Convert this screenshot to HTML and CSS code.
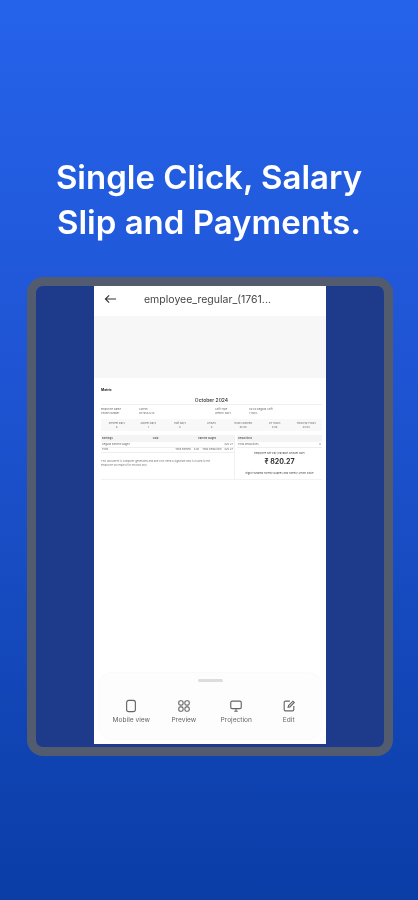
FILE: index.html
```html
<!DOCTYPE html>
<html lang="en">
<head>
<meta charset="utf-8">
<title>Single Click, Salary Slip and Payments.</title>
<link rel="stylesheet" href="styles.css">
</head>
<body>
<main class="screen">
  <h1 class="headline">Single Click, Salary<br>Slip and Payments.</h1>
  <section class="tablet">
    <div class="page">
      <header class="topbar">
        <svg class="back" viewBox="0 0 14 10" aria-hidden="true"><path d="M13 5H1.500M5.500 1 1.500 5l4 4" fill="none" stroke="#333" stroke-width="1.200"/></svg>
        <span class="file">employee_regular_(1761...</span>
      </header>
      <div class="banner"></div>
      <article class="slip">
        <div class="company">Metric</div>
        <div class="month">October 2024</div>
        <div class="info">
          <div><p>Employee Name</p><p>Phone Number</p></div>
          <div><p>Suresh</p><p>9876543210</p></div>
          <div><p>Shift Type</p><p>Weekly Days</p></div>
          <div><p>09:00 Regular Shift</p><p>7 Days</p></div>
        </div>
        <div class="stats">
          <div><p>Present Days</p><p>6</p></div>
          <div><p>Absent Days</p><p>1</p></div>
          <div><p>Half Days</p><p>0</p></div>
          <div><p>Leaves</p><p>0</p></div>
          <div><p>Hours Worked</p><p>48:00</p></div>
          <div><p>OT Hours</p><p>0:00</p></div>
          <div><p>Total Pay Hours</p><p>48:00</p></div>
        </div>
        <div class="ledger">
          <div class="ledger-main">
            <div class="ledger-head"><span>Earnings</span><span>Paid</span><span>Earned Wages</span></div>
            <div class="ledger-row"><span>Regular Earned Wages</span><span>820.27</span></div>
            <div class="ledger-row"><span>Total</span><span class="push">Total Earned</span><span>0.00</span><span>Total Deduction</span><span>820.27</span></div>
            <p class="note">This document is computer generated and does not need a signature and is issued to the employee on request for records only.</p>
          </div>
          <div class="ledger-side">
            <div class="ledger-head"><span>Deductions</span></div>
            <div class="ledger-row"><span>Total Deductions</span><span>0</span></div>
            <p class="net-label">Employee Net Pay (Payable Amount Due)</p>
            <p class="net">₹ 820.27</p>
            <p class="net-foot">Eight Hundred Twenty Rupees and Twenty Seven Paise</p>
          </div>
        </div>
      </article>
      <div class="spacer"></div>
      <nav class="sheet">
        <div class="handle"></div>
        <div class="actions">
          <div class="action">
            <svg viewBox="0 0 16 16" aria-hidden="true"><rect x="3" y="1.500" width="10" height="13" rx="2.500"/></svg>
            <span>Mobile view</span>
          </div>
          <div class="action">
            <svg viewBox="0 0 16 16" aria-hidden="true"><rect x="2" y="2" width="5" height="5" rx="2"/><rect x="9" y="2" width="5" height="5" rx="2"/><rect x="2" y="9" width="5" height="5" rx="2"/><rect x="9" y="9" width="5" height="5" rx="2"/></svg>
            <span>Preview</span>
          </div>
          <div class="action">
            <svg viewBox="0 0 16 16" aria-hidden="true"><rect x="2" y="2.500" width="12" height="8.500" rx="1.500"/><path d="M6 14h4M8 11v3"/></svg>
            <span>Projection</span>
          </div>
          <div class="action">
            <svg viewBox="0 0 16 16" aria-hidden="true"><path d="M9 2.500H4A1.500 1.500 0 0 0 2.500 4v8A1.500 1.500 0 0 0 4 13.500h8a1.500 1.500 0 0 0 1.500-1.500V8"/><path d="M7 9.500l.5-2L12.500 2.500l1.500 1.500-5 5z"/></svg>
            <span>Edit</span>
          </div>
        </div>
      </nav>
    </div>
  </section>
</main>
</body>
</html>
```
FILE: styles.css
```css
* { box-sizing: border-box; }
html, body { margin: 0; padding: 0; }
body { width: 418px; height: 900px; overflow: hidden; font-family: Inter, "Liberation Sans", sans-serif; }
p { margin: 0; }

.screen {
  width: 418px;
  height: 900px;
  padding-top: 155px;
  display: flex;
  flex-direction: column;
  align-items: center;
  background: linear-gradient(180deg, #2563eb 0%, #1f55d4 40%, #0a3da6 100%);
}
.headline {
  margin: 0;
  width: 100%;
  color: #fff;
  font-size: 33px;
  line-height: 45px;
  font-weight: 600;
  text-align: center;
  filter: blur(0.4px);
}
.tablet {
  margin-top: 32px;
  margin-left: 2px;
  width: 366px;
  height: 479px;
  border: 9px solid #525c6e;
  border-radius: 16px;
  background: #1e3a8a;
  display: flex;
  justify-content: center;
}
.page {
  width: 232px;
  height: 458px;
  background: #fff;
  display: flex;
  flex-direction: column;
}
.topbar {
  height: 30px;
  flex: none;
  display: flex;
  align-items: center;
  padding: 0 0 4px 10px;
  filter: blur(0.5px);
}
.back { width: 13px; height: 10px; }
.file { margin-left: 27px; font-size: 10.5px; color: #444; white-space: nowrap; }
.banner { height: 62px; flex: none; background: #f7f7f8; }

.slip { padding: 11px 4px 0 7px; color: #666; font-size: 2.600px; line-height: 3.400px; filter: blur(0.6px); }
.company { font-size: 3.400px; font-weight: 700; color: #222; }
.month { margin-top: 4px; text-align: center; font-size: 5px; line-height: 8px; color: #333; font-weight: 500; border-bottom: 1px solid #f0f0f0; }
.info { margin-top: 3px; display: grid; grid-template-columns: 38px 76px 34px 1fr; padding-bottom: 4px; }
.stats {
  display: grid;
  grid-template-columns: repeat(7, 1fr);
  text-align: center;
  background: #f8f8f9;
  padding: 3px 0 2px;
}
.ledger { margin-top: 4px; display: grid; grid-template-columns: 133px 1fr; border-bottom: 1px solid #f2f2f2; }
.ledger-head { display: flex; gap: 40px; background: #f4f4f5; padding: 2px 1px; font-weight: 500; color: #444; }
.ledger-row { display: flex; justify-content: space-between; padding: 0.500px 1px; border-bottom: 1px solid #eee; gap: 3px; }
.push { margin-left: auto; }
.note { margin-top: 7px; padding-right: 14px; line-height: 3.800px; color: #777; }
.ledger-side { border-left: 1px solid #f0f0f0; padding-left: 2px; }
.net-label { margin-top: 4px; text-align: center; color: #444; }
.net { margin-top: 2px; text-align: center; font-size: 7px; line-height: 9px; font-weight: 700; color: #333; }
.net-foot { margin-top: 6px; text-align: center; color: #444; padding-bottom: 3px; }

.spacer { flex: 1; }
.sheet {
  flex: none;
  height: 66px;
  margin: 0 5px 5px;
  border-radius: 13px;
  background: #fdfdfd;
  box-shadow: 0 0 2px rgba(0,0,0,.07);
  padding-top: 6px;
  filter: blur(0.4px);
}
.handle { width: 25px; height: 2.500px; border-radius: 2px; background: #ddd; margin: 0 auto; }
.actions { margin-top: 17px; display: grid; grid-template-columns: repeat(4, 52.500px); padding-left: 6px; }
.action { display: flex; flex-direction: column; align-items: center; gap: 3px; }
.action svg { width: 14px; height: 14px; fill: none; stroke: #666; stroke-width: 1.300; }
.action span { font-size: 6.600px; line-height: 8px; color: #666; white-space: nowrap; }
```
